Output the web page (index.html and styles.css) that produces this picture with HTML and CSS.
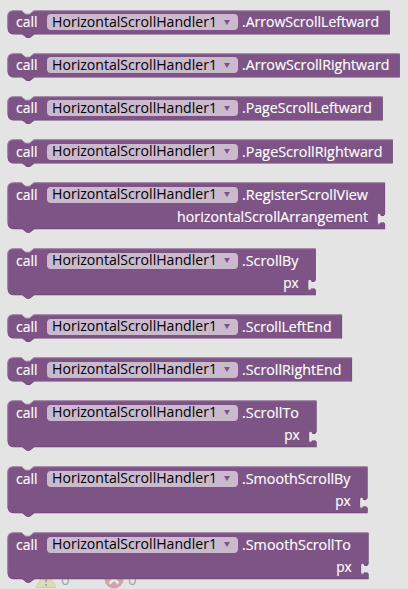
FILE: index.html
```html
<!DOCTYPE html>
<html lang="en">
<head>
<meta charset="utf-8">
<title>HorizontalScrollHandler blocks</title>
<link rel="stylesheet" href="styles.css">
</head>
<body>
<main class="flyout" id="flyout"></main>
<footer class="warnings">
  <svg class="warn-icon" viewBox="0 0 22 20" width="22" height="20"><path d="M11 1 21 18.500H1Z" fill="#dddbb3" stroke="#cfcda9" stroke-linejoin="round"/><path d="M11 6v7M11 15v2" stroke="#aaa" stroke-width="2"/></svg>
  <span class="count">0</span>
  <svg class="error-icon" viewBox="0 0 20 20" width="20" height="20"><circle cx="10" cy="10" r="9.500" fill="#d3a4a4"/><path d="m5.500 5.500 9 9m0-9-9 9" stroke="#e9e4e4" stroke-width="3"/></svg>
  <span class="count">0</span>
</footer>
<script src="blocks.js"></script>
</body>
</html>
```
FILE: styles.css
```css
* { box-sizing: border-box; }
body {
  margin: 0;
  width: 408px;
  height: 589px;
  overflow: hidden;
  position: relative;
  background: #e4e4e4;
  font: 14.67px/20px "Open Sans", "Noto Sans", sans-serif;
}
.flyout {
  position: relative;
  z-index: 1;
  display: flex;
  flex-direction: column;
  align-items: flex-start;
  gap: 18.7px;
  padding: 9.500px 0 0 7px;
}
.block {
  position: relative;
  height: 24.500px;
  color: #fff;
}
.block.tall { height: 47.200px; }
.shape {
  position: absolute;
  left: 0;
  top: 0;
  overflow: visible;
}
.row {
  position: relative;
  display: flex;
  align-items: center;
  height: 22px;
  padding: 1px 0 0 9px;
}
.text {
  display: block;
  white-space: pre;
  transform-origin: 0 50%;
  -webkit-text-stroke: .15px currentColor;
}
.call { width: 31px; }
.field {
  display: flex;
  align-items: center;
  width: 191px;
  height: 16px;
  margin: 2px 4px 0 0;
  padding-left: 4.500px;
  border-radius: 4px;
  background: #cbbace;
  color: #000;
}
.field .name { width: 165px; margin-top: -3px; -webkit-text-stroke: 0; }
.arrow {
  margin-left: 7.500px;
  border: 3px solid transparent;
  border-top: 5px solid #7d5485;
  border-bottom: 0;
}
.input {
  position: relative;
  display: flex;
  justify-content: flex-end;
  height: 24px;
  padding: 2px 17px 0 0;
}
.input .text { transform-origin: 100% 50%; }
.warnings {
  position: absolute;
  left: 35px;
  top: 569px;
  display: flex;
  color: #a5a5a5;
  font-size: 15px;
}
.warnings .count { width: 40px; padding-left: 4px; line-height: 20px; height: 20px; }
.warnings .error-icon { margin-left: 7px; }
```
FILE: blocks.js
```js
// [method, block width, label width, optional argument, argument width]
const blocks = [
  ["ArrowScrollLeftward", 382.5, 137],
  ["ArrowScrollRightward", 392.5, 147.5],
  ["PageScrollLeftward", 375.5, 130],
  ["PageScrollRightward", 385.5, 140.5],
  ["RegisterScrollView", 377.8, 126, "horizontalScrollArrangement", 191],
  ["ScrollBy", 308.5, 56.5, "px", 15.5],
  ["ScrollLeftEnd", 334.800, 89.5],
  ["ScrollRightEnd", 344.800, 99.5],
  ["ScrollTo", 309.3, 57, "px", 15.5],
  ["SmoothScrollBy", 360.3, 108.5, "px", 15.5],
  ["SmoothScrollTo", 361.3, 109, "px", 15.5],
];

function outline(w, h, tall) {
  const socket = tall
    ? `V31.500L${w - 1.5} 33.500H${w - 4}Q${w - 4.5} 31 ${w - 6} 31Q${w - 7.5} 31 ${w - 7.5} 33V40Q${w - 7.5} 42 ${w - 6} 42Q${w - 4.5} 42 ${w - 4} 40H${w - 1.5}L${w} 41.500`
    : "";
  return `M.5 6.500Q.5 .5 6.500 .5H14.500L18.500 4H22.500L27 .5H${w}${socket}V${h - .5}H27L22.500 ${h + 3}H19.500L15 ${h - .5}H7Q.5 ${h - .5} .5 ${h - 6.5}Z`;
}

const text = (cls, value, width) =>
  `<span class="text ${cls}" data-fit="${width}">${value}</span>`;

document.getElementById("flyout").innerHTML = blocks.map(([name, w, lw, arg, aw]) => {
  const h = arg ? 47.2 : 24.5;
  const d = outline(w, h, !!arg);
  return `<section class="block ${arg ? "tall" : ""}" style="width:${w}px">
    <svg class="shape" width="${w}" height="${h}">
      <path d="${d}" fill="#644369" transform="translate(.3 .6)"/>
      <path d="${d}" fill="#7d5485"/>
      <path d="M.7 ${h - 7}V6.500Q.7 .7 6.500 .7H14.500L18.500 4.200H22.500L27 .7H${w}" fill="none" stroke="#a488a9"/>
      ${arg ? `<path d="M${w - 7} 42H${w - 5.5}L${w - 4} 40.500H${w - 1.5}" fill="none" stroke="#a488a9"/>` : ""}
    </svg>
    <div class="row">${text("call", "call", 21.5)}
      <div class="field">${text("name", "HorizontalScrollHandler1", 165)}<i class="arrow"></i></div>
      ${text("method", "." + name, lw)}
    </div>
    ${arg ? `<div class="input">${text("arg", arg, aw)}</div>` : ""}
  </section>`;
}).join("");

// Condense or widen each label to its intended width.
for (const el of document.querySelectorAll("[data-fit]")) {
  const range = document.createRange();
  range.selectNodeContents(el);
  el.style.transform = `scaleX(${el.dataset.fit / range.getBoundingClientRect().width})`;
}
```
